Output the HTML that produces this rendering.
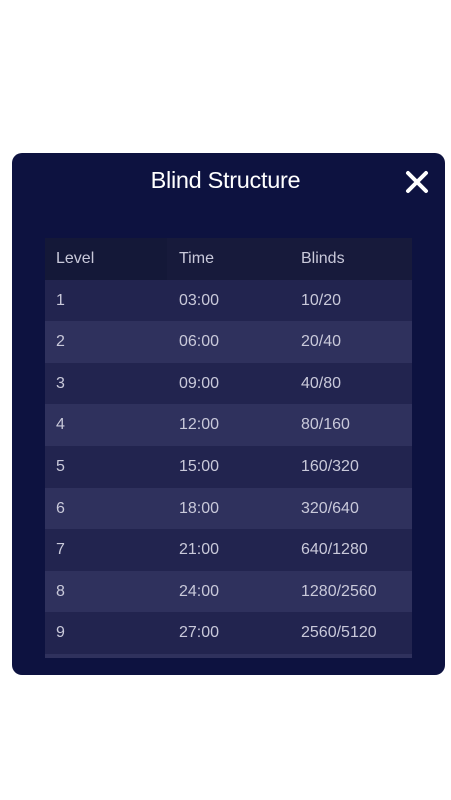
<!DOCTYPE html>
<html><head><style>
body{margin:0;width:451px;height:800px;background:#fff;font-family:"Liberation Sans",sans-serif;position:relative;overflow:hidden}
.m{position:absolute;left:12px;top:153px;width:433px;height:522px;background:#0d1240;border-radius:10px}
.t{position:absolute;left:0;right:0;top:167px;text-align:center;color:#fff;font-size:23.5px;letter-spacing:-0.3px}
.x{position:absolute;left:405px;top:170px}
.tb{position:absolute;left:45px;top:238px;width:367px;height:420px;overflow:hidden}
.r{height:41.6px;position:relative;color:#c9c9da;font-size:16px}
.r span{position:absolute;top:12px}
.h{background:#171a3b}
.o{background:#22244f}.e{background:#2f315d}
</style></head><body>
<div class="m"></div>
<div class="t">Blind Structure</div>
<svg class="x" width="24" height="24" viewBox="0 0 24 24"><path d="M3 3L21 21M21 3L3 21" stroke="#fff" stroke-width="4" stroke-linecap="round"/></svg>
<div class="tb">
<div class="r h"><div style="position:absolute;left:0;top:0;width:122px;height:100%;background:#141838"></div><span style="left:11px">Level</span><span style="left:134px">Time</span><span style="left:256px">Blinds</span></div>
<div class="r o"><span style="left:11px">1</span><span style="left:134px">03:00</span><span style="left:256px">10/20</span></div>
<div class="r e"><span style="left:11px">2</span><span style="left:134px">06:00</span><span style="left:256px">20/40</span></div>
<div class="r o"><span style="left:11px">3</span><span style="left:134px">09:00</span><span style="left:256px">40/80</span></div>
<div class="r e"><span style="left:11px">4</span><span style="left:134px">12:00</span><span style="left:256px">80/160</span></div>
<div class="r o"><span style="left:11px">5</span><span style="left:134px">15:00</span><span style="left:256px">160/320</span></div>
<div class="r e"><span style="left:11px">6</span><span style="left:134px">18:00</span><span style="left:256px">320/640</span></div>
<div class="r o"><span style="left:11px">7</span><span style="left:134px">21:00</span><span style="left:256px">640/1280</span></div>
<div class="r e"><span style="left:11px">8</span><span style="left:134px">24:00</span><span style="left:256px">1280/2560</span></div>
<div class="r o"><span style="left:11px">9</span><span style="left:134px">27:00</span><span style="left:256px">2560/5120</span></div>
<div class="r e"></div>
</div>
</body></html>
